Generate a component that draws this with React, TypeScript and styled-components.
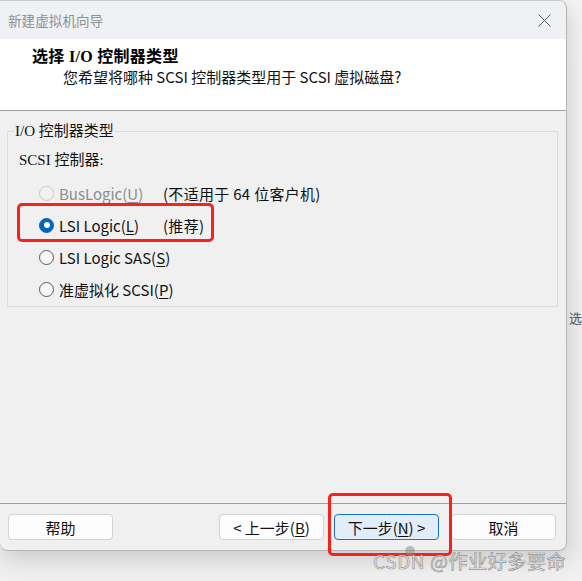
import React from "react";
import styled, { createGlobalStyle } from "styled-components";

const GlobalStyle = createGlobalStyle`
  html, body {
    margin: 0;
    padding: 0;
    background: #f3f3f3;
  }
  body {
    font-family: "Noto Sans CJK SC", "Noto Sans", sans-serif;
    color: #1a1a1a;
  }
`;

const Page = styled.div`
  position: relative;
  width: 582px;
  height: 581px;
  display: flex;
  align-items: flex-start;
  overflow: hidden;
  background: linear-gradient(180deg, #f4f4f4 0%, #f0f0f0 100%);
`;

const Dialog = styled.div`
  width: 567px;
  height: 551px;
  box-sizing: border-box;
  display: flex;
  flex-direction: column;
  border: 1px solid #b4b4b4;
  border-left: none;
  border-top-color: #c8c8c8;
  border-radius: 0 8px 8px 8px;
  background: #f0f0f0;
  box-shadow: 2px 8px 22px rgba(0, 0, 0, 0.16);
  flex-shrink: 0;
`;

const TitleBar = styled.div`
  height: 38px;
  display: flex;
  align-items: center;
  justify-content: space-between;
  padding: 0 15px 0 8px;
  background: #eff1f5;
  border-radius: 0 8px 0 0;
  flex-shrink: 0;
`;

const TitleText = styled.span`
  font-size: 13.5px;
  color: #909090;
  letter-spacing: 0.1px;
`;

const CloseBtn = styled.div`
  width: 14px;
  height: 14px;
  display: flex;
  align-items: center;
  justify-content: center;
`;

const Header = styled.div`
  height: 72px;
  box-sizing: border-box;
  padding: 8px 0 0 32px;
  background: #fff;
  border-bottom: 1px solid #a0a0a0;
  flex-shrink: 0;
`;

const HeaderTitle = styled.div`
  font-family: "Liberation Serif", "Noto Sans CJK SC", serif;
  font-weight: bold;
  font-size: 16px;
  line-height: 20px;
  letter-spacing: 0.3px;
  color: #000;
`;

const HeaderSub = styled.div`
  font-size: 15px;
  line-height: 20px;
  padding-left: 31px;
  color: #111;
`;

const Content = styled.div`
  flex: 1;
  padding: 10px 8px 0 7px;
`;

const Group = styled.fieldset`
  margin: 0;
  padding: 0 0 1px 6px;
  border: 1px solid #dcdcdc;
  min-width: 0;
`;

const Legend = styled.legend`
  font-family: "Liberation Serif", "Noto Sans CJK SC", serif;
  font-size: 15px;
  line-height: 20px;
  padding: 0 1px;
  color: #111;
`;

const GroupLabel = styled.div`
  font-family: "Liberation Serif", "Noto Sans CJK SC", serif;
  font-size: 15px;
  line-height: 20px;
  margin: 9px 0 7px 5px;
  color: #111;
`;

const Row = styled.div`
  position: relative;
  height: 32px;
  display: flex;
  align-items: center;
  padding-left: 25px;
  font-size: 15px;
`;

const Radio = styled.span<{ $state: "off" | "on" | "disabled" }>`
  width: 15px;
  height: 15px;
  box-sizing: border-box;
  border-radius: 50%;
  margin-right: 5px;
  display: flex;
  align-items: center;
  justify-content: center;
  flex-shrink: 0;
  border: 1px solid
    ${(p) => (p.$state === "on" ? "#0067c0" : p.$state === "disabled" ? "#c9c9c9" : "#5a5a5a")};
  background: ${(p) => (p.$state === "on" ? "#0067c0" : p.$state === "disabled" ? "#f2f2f2" : "#f7f7f7")};
  &::after {
    content: "";
    display: ${(p) => (p.$state === "on" ? "block" : "none")};
    width: 6px;
    height: 6px;
    border-radius: 50%;
    background: #fff;
  }
`;

const Label = styled.span<{ $disabled?: boolean; $wide?: boolean }>`
  width: ${(p) => (p.$wide ? "auto" : "104px")};
  color: ${(p) => (p.$disabled ? "#8c8c8c" : "#111")};
  white-space: nowrap;
  u {
    text-underline-offset: 2px;
  }
`;

const Note = styled.span`
  color: #111;
  white-space: nowrap;
  letter-spacing: 0.3px;
`;

const Highlight = styled.div<{ $left: number; $top: number; $w: number; $h: number }>`
  position: absolute;
  left: ${(p) => p.$left}px;
  top: ${(p) => p.$top}px;
  width: ${(p) => p.$w}px;
  height: ${(p) => p.$h}px;
  box-sizing: border-box;
  border: 3px solid #f5231b;
  border-radius: 5px;
  pointer-events: none;
  z-index: 2;
`;

const Footer = styled.div`
  height: 47px;
  box-sizing: border-box;
  border-top: 1px solid #a0a0a0;
  display: flex;
  align-items: flex-start;
  padding: 10px 10px 0 8px;
  border-radius: 0 0 8px 8px;
  flex-shrink: 0;
`;

const Spacer = styled.div`
  flex: 1;
`;

const Button = styled.div<{ $primary?: boolean; $gap?: number }>`
  position: relative;
  width: 105px;
  height: 26px;
  box-sizing: border-box;
  margin-left: ${(p) => p.$gap ?? 0}px;
  display: flex;
  align-items: center;
  justify-content: center;
  font-size: 15px;
  color: #111;
  border-radius: 4px;
  border: 1px solid ${(p) => (p.$primary ? "#1a72c4" : "#d2d2d2")};
  background: ${(p) => (p.$primary ? "#e1edf8" : "#fdfdfd")};
  u {
    text-underline-offset: 2px;
  }
`;

const SideStrip = styled.div`
  flex: 1;
  overflow: hidden;
  padding-top: 309px;
`;

const SideText = styled.div`
  margin-left: 2px;
  font-size: 13px;
  line-height: 18px;
  color: #555;
  white-space: nowrap;
`;

const Watermark = styled.div`
  position: absolute;
  left: 373px;
  top: 549px;
  font-family: "Noto Sans CJK SC", sans-serif;
  font-size: 19px;
  line-height: 24px;
  letter-spacing: 0.6px;
  color: rgba(238, 238, 238, 0.85);
  -webkit-text-stroke: 0.7px rgba(120, 120, 120, 0.75);
  white-space: nowrap;
  z-index: 3;
`;

const WatermarkDot = styled.div`
  position: absolute;
  left: 405px;
  top: 546px;
  width: 10px;
  height: 10px;
  border-radius: 50%;
  background: rgba(140, 140, 140, 0.55);
  z-index: 3;
`;

const CloseIcon = () => (
  <svg width="13" height="13" viewBox="0 0 13 13">
    <path d="M0.5 0.5 L12.5 12.5 M12.5 0.5 L0.5 12.5" stroke="#5c5c5c" strokeWidth="1" fill="none" />
  </svg>
);

const App: React.FC = () => {
  return (
    <Page>
      <GlobalStyle />
      <Dialog>
        <TitleBar>
          <TitleText>新建虚拟机向导</TitleText>
          <CloseBtn>
            <CloseIcon />
          </CloseBtn>
        </TitleBar>
        <Header>
          <HeaderTitle>选择 I/O 控制器类型</HeaderTitle>
          <HeaderSub>您希望将哪种 SCSI 控制器类型用于 SCSI 虚拟磁盘?</HeaderSub>
        </Header>
        <Content>
          <Group>
            <Legend>I/O 控制器类型</Legend>
            <GroupLabel>SCSI 控制器:</GroupLabel>
            <Row>
              <Radio $state="disabled" />
              <Label $disabled>
                BusLogic(<u>U</u>)
              </Label>
              <Note>(不适用于 64 位客户机)</Note>
            </Row>
            <Row>
              <Radio $state="on" />
              <Label>
                LSI Logic(<u>L</u>)
              </Label>
              <Note>(推荐)</Note>
              <Highlight $left={3} $top={-6} $w={197} $h={39} />
            </Row>
            <Row>
              <Radio $state="off" />
              <Label $wide>
                LSI Logic SAS(<u>S</u>)
              </Label>
            </Row>
            <Row>
              <Radio $state="off" />
              <Label $wide>
                准虚拟化 SCSI(<u>P</u>)
              </Label>
            </Row>
          </Group>
        </Content>
        <Footer>
          <Button>帮助</Button>
          <Spacer />
          <Button>
            &lt; 上一步(<u>B</u>)
          </Button>
          <Button $primary $gap={10}>
            下一步(<u>N</u>) &gt;
            <Highlight $left={-7} $top={-22} $w={124} $h={63} />
          </Button>
          <Button $gap={12}>取消</Button>
        </Footer>
      </Dialog>
      <SideStrip>
        <SideText>选</SideText>
      </SideStrip>
      <WatermarkDot />
      <Watermark>CSDN @作业好多要命</Watermark>
    </Page>
  );
};

export default App;
